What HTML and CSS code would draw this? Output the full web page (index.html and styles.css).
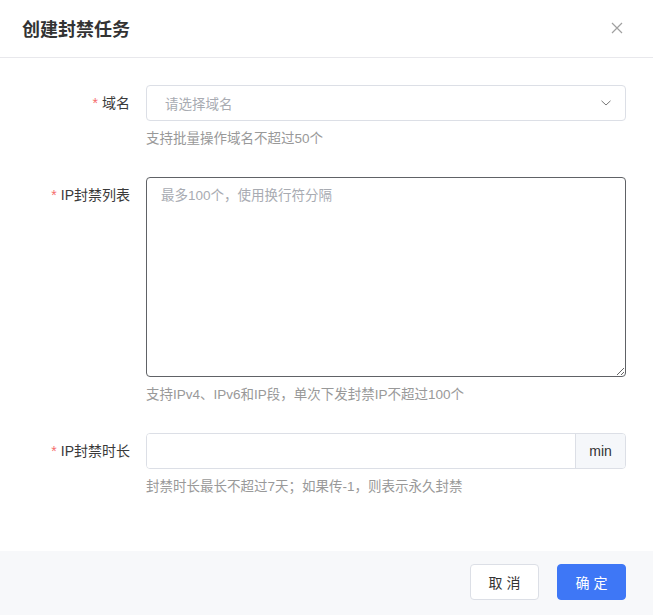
FILE: index.html
```html
<!DOCTYPE html>
<html lang="zh-CN">
<head>
<meta charset="utf-8">
<title>创建封禁任务</title>
<link rel="stylesheet" href="styles.css">
</head>
<body>
<div class="dialog">
  <div class="header">
    <div class="title">创建封禁任务</div>
    <svg class="close" width="12" height="12" viewBox="0 0 12 12"><path d="M1 1 L11 11 M11 1 L1 11" stroke="#a0a0a0" stroke-width="1.2" fill="none"/></svg>
  </div>
  <div class="body">
    <div class="row">
      <label class="label"><span class="req">*</span>域名</label>
      <div class="field">
        <div class="select">
          <span class="placeholder">请选择域名</span>
          <svg class="chev" width="10" height="6" viewBox="0 0 10 6"><path d="M0.5 0.8 L5 5 L9.5 0.8" stroke="#777" stroke-width="1" fill="none"/></svg>
        </div>
        <div class="help">支持批量操作域名不超过50个</div>
      </div>
    </div>
    <div class="row">
      <label class="label"><span class="req">*</span>IP封禁列表</label>
      <div class="field">
        <textarea class="textarea" placeholder="最多100个，使用换行符分隔"></textarea>
        <div class="help">支持IPv4、IPv6和IP段，单次下发封禁IP不超过100个</div>
      </div>
    </div>
    <div class="row">
      <label class="label"><span class="req">*</span>IP封禁时长</label>
      <div class="field">
        <div class="group">
          <input class="input" type="text">
          <span class="addon">min</span>
        </div>
        <div class="help">封禁时长最长不超过7天；如果传-1，则表示永久封禁</div>
      </div>
    </div>
  </div>
  <div class="footer">
    <button class="btn">取 消</button>
    <button class="btn primary">确 定</button>
  </div>
</div>
</body>
</html>
```

FILE: styles.css
```css
* { box-sizing: border-box; }
html, body { margin: 0; padding: 0; background: #fff; }
body {
  font-family: "Liberation Sans", "Noto Sans CJK SC", sans-serif;
  color: #333;
  width: 653px;
  height: 615px;
  overflow: hidden;
}
.dialog { width: 653px; height: 615px; display: flex; flex-direction: column; }
.header {
  height: 58px;
  border-bottom: 1px solid #e8e8ec;
  display: flex;
  align-items: center;
  justify-content: space-between;
  padding: 0 30px 0 22px;
}
.title { font-size: 18px; font-weight: bold; color: #333; letter-spacing: 0; margin-top: -2px; }
.close { display: block; margin-top: -2px; }
.body { flex: 1; padding-top: 27px; }
.row {
  display: grid;
  grid-template-columns: 130px 480px;
  column-gap: 16px;
  margin-bottom: 28px;
}
.label {
  font-size: 14px;
  color: #3a3a3a;
  text-align: right;
  height: 36px;
  line-height: 36px;
}
.req { color: #f56c6c; margin-right: 4px; }
.select {
  height: 36px;
  border: 1px solid #dcdfe6;
  border-radius: 4px;
  display: flex;
  align-items: center;
  justify-content: space-between;
  padding: 0 14px 0 18px;
}
.placeholder { font-size: 13.5px; color: #a8abb2; }
.chev { display: block; }
.help {
  font-size: 13.5px;
  color: #999;
  line-height: 20px;
  margin-top: 8px;
}
.textarea {
  display: block;
  width: 480px;
  height: 200px;
  border: 1px solid #606266;
  border-radius: 4px;
  padding: 8px 14px;
  font-family: "Liberation Sans", "Noto Sans CJK SC", sans-serif;
  font-size: 13.5px;
  line-height: 20px;
  color: #333;
  resize: vertical;
  outline: none;
}
.textarea::placeholder { color: #a8abb2; }
.group {
  display: flex;
  height: 36px;
  border: 1px solid #dcdfe6;
  border-radius: 4px;
  overflow: hidden;
}
.input {
  flex: 1;
  border: none;
  outline: none;
  padding: 0 14px;
  font-size: 14px;
  min-width: 0;
}
.addon {
  width: 50px;
  background: #f5f7fa;
  border-left: 1px solid #dcdfe6;
  font-size: 14px;
  color: #333;
  display: flex;
  align-items: center;
  justify-content: center;
}
.footer {
  height: 64px;
  background: #f7f8fa;
  display: flex;
  align-items: center;
  justify-content: flex-end;
  gap: 18px;
  padding: 0 27px 2px 0;
}
.btn {
  width: 69px;
  height: 36px;
  border: 1px solid #dcdfe6;
  border-radius: 4px;
  background: #fff;
  color: #333;
  font-family: "Liberation Sans", "Noto Sans CJK SC", sans-serif;
  font-size: 14px;
  padding: 0;
}
.btn.primary {
  background: #3e77f6;
  border-color: #3e77f6;
  color: #fff;
}
```
